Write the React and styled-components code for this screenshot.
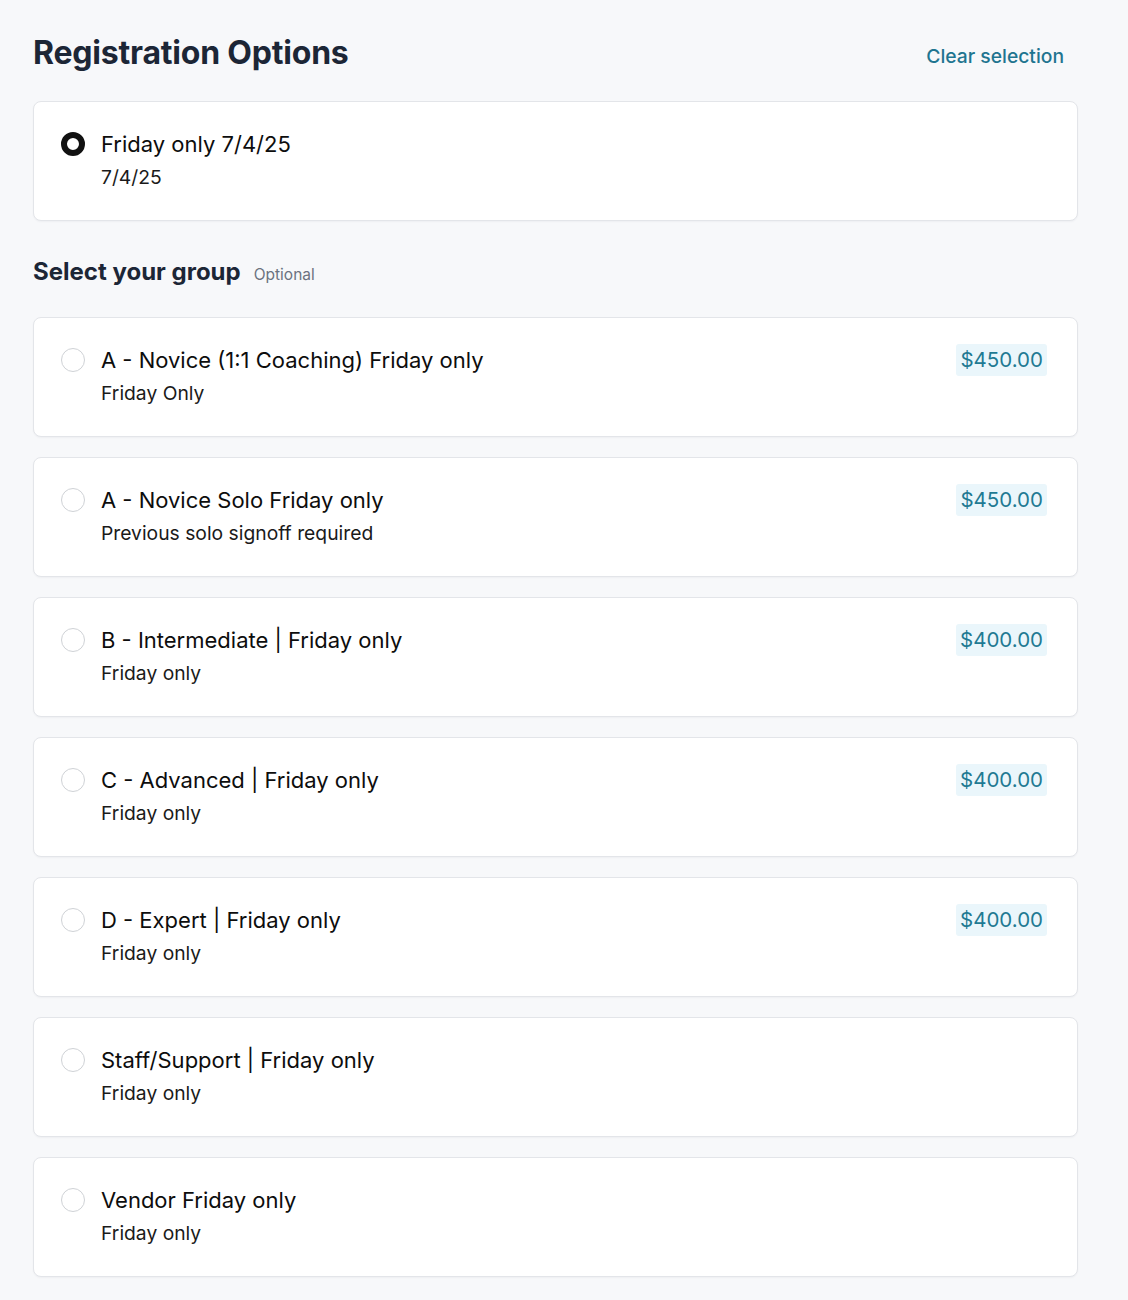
import React from 'react'
import styled, { createGlobalStyle } from 'styled-components'

const GlobalStyle = createGlobalStyle`
    body {
        margin: 0;
        background: #f7f8fa;
        font-family: Inter, "Noto Sans", sans-serif;
        color: #111827;
    }
`

const Page = styled.div`
    padding: 33px 50px 20px 33px;
    display: flex;
    flex-direction: column;
`

const Header = styled.div`
    display: flex;
    justify-content: space-between;
    align-items: center;
    padding-right: 14px;

    & h1 {
        margin: 0;
        font-size: 32px;
        font-weight: 700;
        color: #1c2636;
        letter-spacing: -0.2px;
    }
`

const ClearButton = styled.button`
    border: none;
    background: none;
    padding: 0;
    margin-top: 6px;
    font-family: inherit;
    font-size: 19.3px;
    font-weight: 500;
    color: #1f7590;
    cursor: pointer;
`

const List = styled.div`
    display: flex;
    flex-direction: column;
    gap: 20px;
    margin-top: ${p => p.$top || 0}px;
`

const Card = styled.label`
    display: flex;
    align-items: flex-start;
    height: 120px;
    box-sizing: border-box;
    padding: 29px 30px 0 27px;
    background: #fff;
    border: 1px solid #e3e5e9;
    border-radius: 8px;
    box-shadow: 0 1px 2px rgba(16, 24, 40, 0.04);
    cursor: pointer;
`

const Radio = styled.span`
    flex: none;
    width: 24px;
    height: 24px;
    box-sizing: border-box;
    margin-top: 1px;
    border-radius: 50%;
    border: ${p => (p.checked ? '6px solid #111' : '1px solid #cfd2d6')};
    background: #fff;
`

const Info = styled.div`
    flex: 1;
    display: flex;
    flex-direction: column;
    gap: 7px;
    margin-left: 16px;

    & .title {
        font-size: 22px;
        line-height: 26px;
        color: #0d0d0d;
    }

    & .sub {
        font-size: 19.3px;
        line-height: 26px;
        color: #1a1a1a;
    }
`

const Price = styled.span`
    margin-top: -3px;
    padding: 3px 4px;
    background: #eaf6fb;
    border-radius: 3px;
    font-size: 20.5px;
    line-height: 26px;
    color: #1f7a93;
`

const SectionTitle = styled.div`
    display: flex;
    align-items: baseline;
    gap: 13px;
    margin: 36px 0 31px;

    & h2 {
        margin: 0;
        font-size: 24px;
        font-weight: 700;
        color: #1c2636;
    }

    & span {
        font-size: 15.5px;
        color: #6b7280;
    }
`

const groups = [
    { title: 'A - Novice (1:1 Coaching) Friday only', sub: 'Friday Only', price: '$450.00' },
    { title: 'A - Novice Solo Friday only', sub: 'Previous solo signoff required', price: '$450.00' },
    { title: 'B - Intermediate | Friday only', sub: 'Friday only', price: '$400.00' },
    { title: 'C - Advanced | Friday only', sub: 'Friday only', price: '$400.00' },
    { title: 'D - Expert | Friday only', sub: 'Friday only', price: '$400.00' },
    { title: 'Staff/Support | Friday only', sub: 'Friday only' },
    { title: 'Vendor Friday only', sub: 'Friday only' },
]

function Option({ title, sub, price, checked }) {
    return (
        <Card>
            <Radio checked={checked} />
            <Info>
                <span className="title">{title}</span>
                <span className="sub">{sub}</span>
            </Info>
            {price && <Price>{price}</Price>}
        </Card>
    )
}

export default function App() {
    return (
        <Page>
            <GlobalStyle />
            <Header>
                <h1>Registration Options</h1>
                <ClearButton>Clear selection</ClearButton>
            </Header>
            <List $top={29}>
                <Option title="Friday only 7/4/25" sub="7/4/25" checked />
            </List>
            <SectionTitle>
                <h2>Select your group</h2>
                <span>Optional</span>
            </SectionTitle>
            <List>
                {groups.map(g => (
                    <Option key={g.title} {...g} />
                ))}
            </List>
        </Page>
    )
}
